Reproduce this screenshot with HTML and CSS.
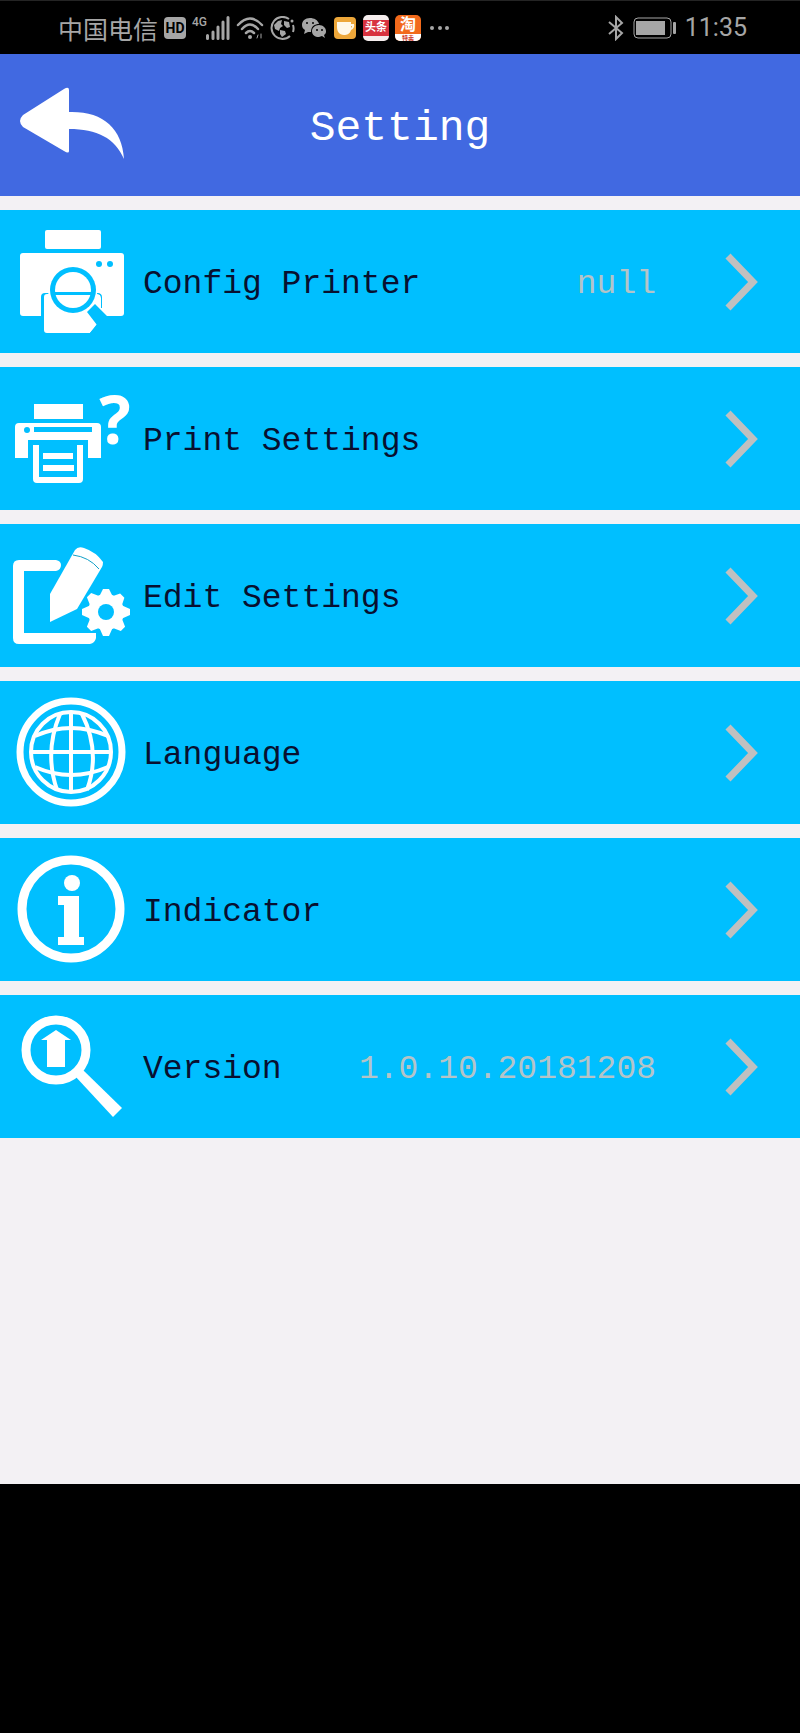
FILE: index.html
```html
<!DOCTYPE html>
<html lang="en">
<head>
    <meta charset="UTF-8">
    <meta name="viewport" content="width=device-width, initial-scale=1.0">
    <title>Setting</title>
    <link rel="stylesheet" href="styles.css">
</head>
<body>

<!-- Status bar -->
<div class="status-bar">
    <span class="carrier" lang="zh">中国电信</span>
    <span class="hd">HD</span>
    <span class="signal">
        <span class="network">4G</span>
        <svg width="25" height="24" viewBox="0 0 25 24">
            <path d="M2.500 19.500v3M8 16v6.500M13 11v11.500M18 6v16.500M23 1.500v21" stroke="#a6a6a6" stroke-width="3" stroke-linecap="round"/>
        </svg>
    </span>
    <svg width="28" height="24" viewBox="0 0 28 24" fill="none" stroke="#a6a6a6" stroke-width="2.500" stroke-linecap="round">
        <path d="M2 9Q14-4 26 9M6 13Q14 4 22 13M10 17Q14 13 18 17"/>
        <circle cx="14" cy="21" r="2" fill="#a6a6a6" stroke="none"/>
        <path d="M21 22l1-3M25 18v4" stroke-width="1"/>
    </svg>
    <svg width="25" height="24" viewBox="0 0 25 24">
        <path d="M19 3A11 11 0 1 0 20 20M23 9A11 11 0 0 1 23 16" fill="none" stroke="#a6a6a6" stroke-width="2"/>
        <circle cx="22" cy="5" r="1.500" fill="#a6a6a6"/>
        <path d="M4 9L8 5L12 4L11 8L13 10L10 12L9 15L5 13ZM14 5L19 6L20 11L17 12L14 9ZM10 14L15 15L16 18L12 21L10 18Z" fill="#a6a6a6"/>
    </svg>
    <svg width="26" height="24" viewBox="0 0 26 24">
        <path d="M9 2C4 2 1 5 1 9C1 11 2 13 4 14L3 18L7 16L10 16C10 10 14 8 18 8C17 4 13 2 9 2Z" fill="#a6a6a6"/>
        <path d="M18 9C14 9 11 12 11 15C11 19 14 21 18 21L21 20L24 22L23 19C25 18 25 16 25 15C25 12 22 9 18 9Z" fill="#a6a6a6"/>
        <g fill="#000">
            <circle cx="6" cy="7" r="1"/><circle cx="12" cy="7" r="1"/>
            <circle cx="16" cy="14" r="1"/><circle cx="21" cy="14" r="1"/>
        </g>
    </svg>
    <svg width="24" height="24" viewBox="0 0 24 24">
        <rect x="1" y="1" width="22" height="22" rx="4" fill="#eda73a"/>
        <path d="M4 6H18V8H21Q22 12 18 14C17 18 14 19 11 19C6 19 4 15 4 11Z" fill="#fff8e8"/>
        <path d="M18 10h1q0 1-1 2z" fill="#eda73a"/>
    </svg>
    <span class="app toutiao" lang="zh"><span>头条</span></span>
    <span class="app taobao" lang="zh"><span>淘</span><small>特卖</small></span>
    <svg width="24" height="24" viewBox="0 0 24 24" fill="#a6a6a6">
        <circle cx="5" cy="12" r="2"/><circle cx="13" cy="12" r="2"/><circle cx="20" cy="12" r="2"/>
    </svg>

    <div class="status-right">
        <svg width="18" height="26" viewBox="0 0 18 26" fill="none" stroke="#a6a6a6" stroke-width="2">
            <path d="M2 7L15 18L9 24V2L15 8L2 19"/>
        </svg>
        <svg width="44" height="22" viewBox="0 0 44 22">
            <rect x="1" y="1" width="37" height="20" rx="4" fill="none" stroke="#a6a6a6"/>
            <rect x="3" y="4" width="29" height="14" fill="#a6a6a6"/>
            <rect x="40" y="5" width="3" height="12" rx="1" fill="#a6a6a6"/>
        </svg>
        <span class="time">11:35</span>
    </div>
</div>

<header class="header">
    <button class="back-button" type="button" aria-label="Back">
        <svg width="143" height="142" viewBox="0 0 143 142" fill="#fff">
            <path d="M64 35Q69 32 69 36V58C103 57 122 74 124 105C115 84 97 75 69 75V97Q69 100 64 97L23 73Q17 67 23 61Z"/>
        </svg>
    </button>
    <h1>Setting</h1>
</header>

<main>
    <ul class="settings">
        <li>
            <a class="row" href="#">
                <svg class="icon" viewBox="0 0 143 143">
                    <rect x="45" y="20" width="56" height="19" rx="2"/>
                    <rect x="20" y="43" width="104" height="63" rx="3"/>
                    <path class="cut" d="M41 107V87Q41 83 45 83H97Q101 83 101 87V107Z"/>
                    <path d="M44 87Q44 84 47 84H97Q101 84 101 88V100L107 106L97 114L90 123H47Q44 123 44 120Z"/>
                    <path class="cut" d="M87 102L95 94L107 106H124V124H89L97 115Z"/>
                    <circle cx="73" cy="80" r="25"/>
                    <circle class="cut" cx="73" cy="80" r="23"/>
                    <circle cx="73" cy="80" r="18"/>
                    <path class="cut" d="M54 82h38v3h-38zM97 84q4 0 4 4v10h1v-11q0-4-5-4z"/>
                    <circle class="cut" cx="99" cy="54" r="3"/>
                    <circle class="cut" cx="110" cy="54" r="3"/>
                </svg>
                <span class="label">Config Printer</span>
                <span class="value">null</span>
                <svg class="chevron" viewBox="0 0 32 58"><path d="M3 3L28 29L3 55"/></svg>
            </a>
        </li>
        <li>
            <a class="row" href="#">
                <svg class="icon" viewBox="0 0 143 143">
                    <rect x="34" y="37" width="49" height="15"/>
                    <path d="M19 56H97Q101 56 101 60V91H88V73H28V91H15V60Q15 56 19 56Z"/>
                    <rect class="cut" x="34" y="60" width="58" height="5"/>
                    <circle class="cut" cx="27" cy="63" r="3"/>
                    <path d="M33 78H39V110H77V78H83V112Q83 116 79 116H37Q33 116 33 112Z"/>
                    <rect x="43" y="86" width="30" height="6"/>
                    <rect x="43" y="98" width="31" height="6"/>
                    <text class="question" x="115" y="77" text-anchor="middle">?</text>
                </svg>
                <span class="label">Print Settings</span>
                <svg class="chevron" viewBox="0 0 32 58"><path d="M3 3L28 29L3 55"/></svg>
            </a>
        </li>
        <li>
            <a class="row" href="#">
                <svg class="icon" viewBox="0 0 143 143">
                    <path d="M19 36H56Q61 37 61 41Q61 46 56 47H24V109H96V114Q95 119 90 120H19Q13 120 13 114V42Q13 36 19 36Z"/>
                    <path d="M75 26Q78 22 84 24Q96 28 103 38Q103 41 102 43L77 85L50 98V70Z"/>
                    <path class="line" d="M73 31Q89 33 99 45"/>
                    <circle cx="106" cy="88" r="18"/>
                    <g id="teeth">
                        <path d="M99 73L103 65H109L113 73ZM99 103L103 112H109L113 103Z"/>
                        <path d="M91 81L82 85V91L91 95ZM121 81L130 85V91L121 95Z"/>
                    </g>
                    <use href="#teeth" transform="rotate(45 106 88)"/>
                    <circle class="cut" cx="106" cy="88" r="8"/>
                </svg>
                <span class="label">Edit Settings</span>
                <svg class="chevron" viewBox="0 0 32 58"><path d="M3 3L28 29L3 55"/></svg>
            </a>
        </li>
        <li>
            <a class="row" href="#">
                <svg class="icon outline" viewBox="0 0 143 143">
                    <circle cx="71" cy="71" r="51" stroke-width="7"/>
                    <circle cx="71" cy="71" r="40" stroke-width="4"/>
                    <g stroke-width="4">
                        <path d="M71 30V112M31 71H111"/>
                        <path d="M60 33Q44 71 57 109M82 33Q101 71 87 109"/>
                        <path d="M35 55Q71 39 108 55M35 86Q71 102 108 86"/>
                    </g>
                </svg>
                <span class="label">Language</span>
                <svg class="chevron" viewBox="0 0 32 58"><path d="M3 3L28 29L3 55"/></svg>
            </a>
        </li>
        <li>
            <a class="row" href="#">
                <svg class="icon" viewBox="0 0 143 143">
                    <circle cx="71" cy="71" r="49" fill="none" stroke="#fff" stroke-width="9"/>
                    <circle cx="72" cy="45" r="8"/>
                    <rect x="58" y="58" width="21" height="9"/>
                    <rect x="64" y="58" width="15" height="48"/>
                    <rect x="58" y="99" width="26" height="8"/>
                </svg>
                <span class="label">Indicator</span>
                <svg class="chevron" viewBox="0 0 32 58"><path d="M3 3L28 29L3 55"/></svg>
            </a>
        </li>
        <li>
            <a class="row" href="#">
                <svg class="icon" viewBox="0 0 143 143">
                    <circle cx="56" cy="55" r="30" fill="none" stroke="#fff" stroke-width="9"/>
                    <path d="M56 35L71 45H65V72H47V45H41Z"/>
                    <path d="M75 81L83 75L122 113L113 122Z"/>
                </svg>
                <span class="label">Version</span>
                <span class="value">1.0.10.20181208</span>
                <svg class="chevron" viewBox="0 0 32 58"><path d="M3 3L28 29L3 55"/></svg>
            </a>
        </li>
    </ul>
</main>

<footer class="bottom-bar"></footer>

</body>
</html>
```
FILE: styles.css
```css
* {
    box-sizing: border-box;
}
body {
    font-family: 'Liberation Mono', monospace;
    background-color: #f3f1f4;
    margin: 0;
    min-height: 100vh;
    display: flex;
    flex-direction: column;
}
.status-bar {
    display: flex;
    align-items: center;
    gap: 6px;
    height: 54px;
    padding: 0 53px 0 58px;
    background-color: #000;
    border-top: 1px solid #242424;
    color: #a6a6a6;
    font-family: Roboto, 'Noto Sans CJK SC', sans-serif;
}
.carrier {
    font-family: 'Noto Sans CJK SC', sans-serif;
    font-size: 25px;
    line-height: 30px;
}
.hd {
    width: 22px;
    line-height: 22px;
    border-radius: 4px;
    background-color: #a6a6a6;
    color: #000;
    font-size: 14px;
    font-weight: bold;
    text-align: center;
}
.signal {
    display: flex;
    width: 38px;
}
.network {
    width: 13px;
    font-size: 12px;
    font-weight: 500;
    line-height: 12px;
}
.signal svg {
    flex-shrink: 0;
}
.app {
    display: flex;
    flex-direction: column;
    justify-content: center;
    width: 26px;
    height: 26px;
    border-radius: 5px;
    overflow: hidden;
    text-align: center;
    color: #fff;
    font-weight: bold;
}
.toutiao {
    background-color: #f6eeee;
}
.toutiao span {
    background-color: #d8333f;
    font-size: 11px;
    line-height: 16px;
}
.taobao {
    background-color: #f26a1b;
}
.taobao span {
    font-size: 16px;
    line-height: 19px;
}
.taobao small {
    background-color: #fff;
    color: #d0402a;
    font-size: 6px;
    line-height: 7px;
}
.status-right {
    display: flex;
    align-items: center;
    gap: 8px;
    margin-left: auto;
}
.time {
    font-size: 25px;
    line-height: 30px;
}
.header {
    display: grid;
    grid-template-columns: 143px 1fr 143px;
    align-items: center;
    background-color: #4169e1;
}
.back-button {
    padding: 0;
    border: none;
    background: none;
    cursor: pointer;
}
.back-button svg {
    display: block;
}
h1 {
    margin: 0;
    padding-top: 6px;
    color: #fff;
    font-size: 43px;
    font-weight: normal;
    text-align: center;
}
main {
    flex: 1;
}
.settings {
    display: flex;
    flex-direction: column;
    gap: 14px;
    margin: 0;
    padding: 14px 0;
    list-style-type: none;
}
.row {
    display: flex;
    align-items: center;
    padding-right: 43px;
    background-color: #00bfff;
    color: #081030;
    font-size: 33px;
    text-decoration: none;
}
.icon {
    width: 143px;
    height: 143px;
    flex-shrink: 0;
    fill: #fff;
}
.icon .cut {
    fill: #00bfff;
}
.icon .line {
    fill: none;
    stroke: #12a0c8;
}
.icon .question {
    font-family: 'Open Sans', sans-serif;
    font-size: 66px;
    font-weight: 700;
}
.outline {
    fill: none;
    stroke: #fff;
}
.label,
.value {
    padding-top: 6px;
}
.value {
    margin-left: auto;
    color: #b4c4c8;
}
.chevron {
    width: 32px;
    height: 58px;
    flex-shrink: 0;
    margin-left: auto;
    fill: none;
    stroke: #c0c0c0;
    stroke-width: 7;
    overflow: visible;
}
.value + .chevron {
    margin-left: 69px;
}
.bottom-bar {
    height: 249px;
    background-color: #000;
}
```
